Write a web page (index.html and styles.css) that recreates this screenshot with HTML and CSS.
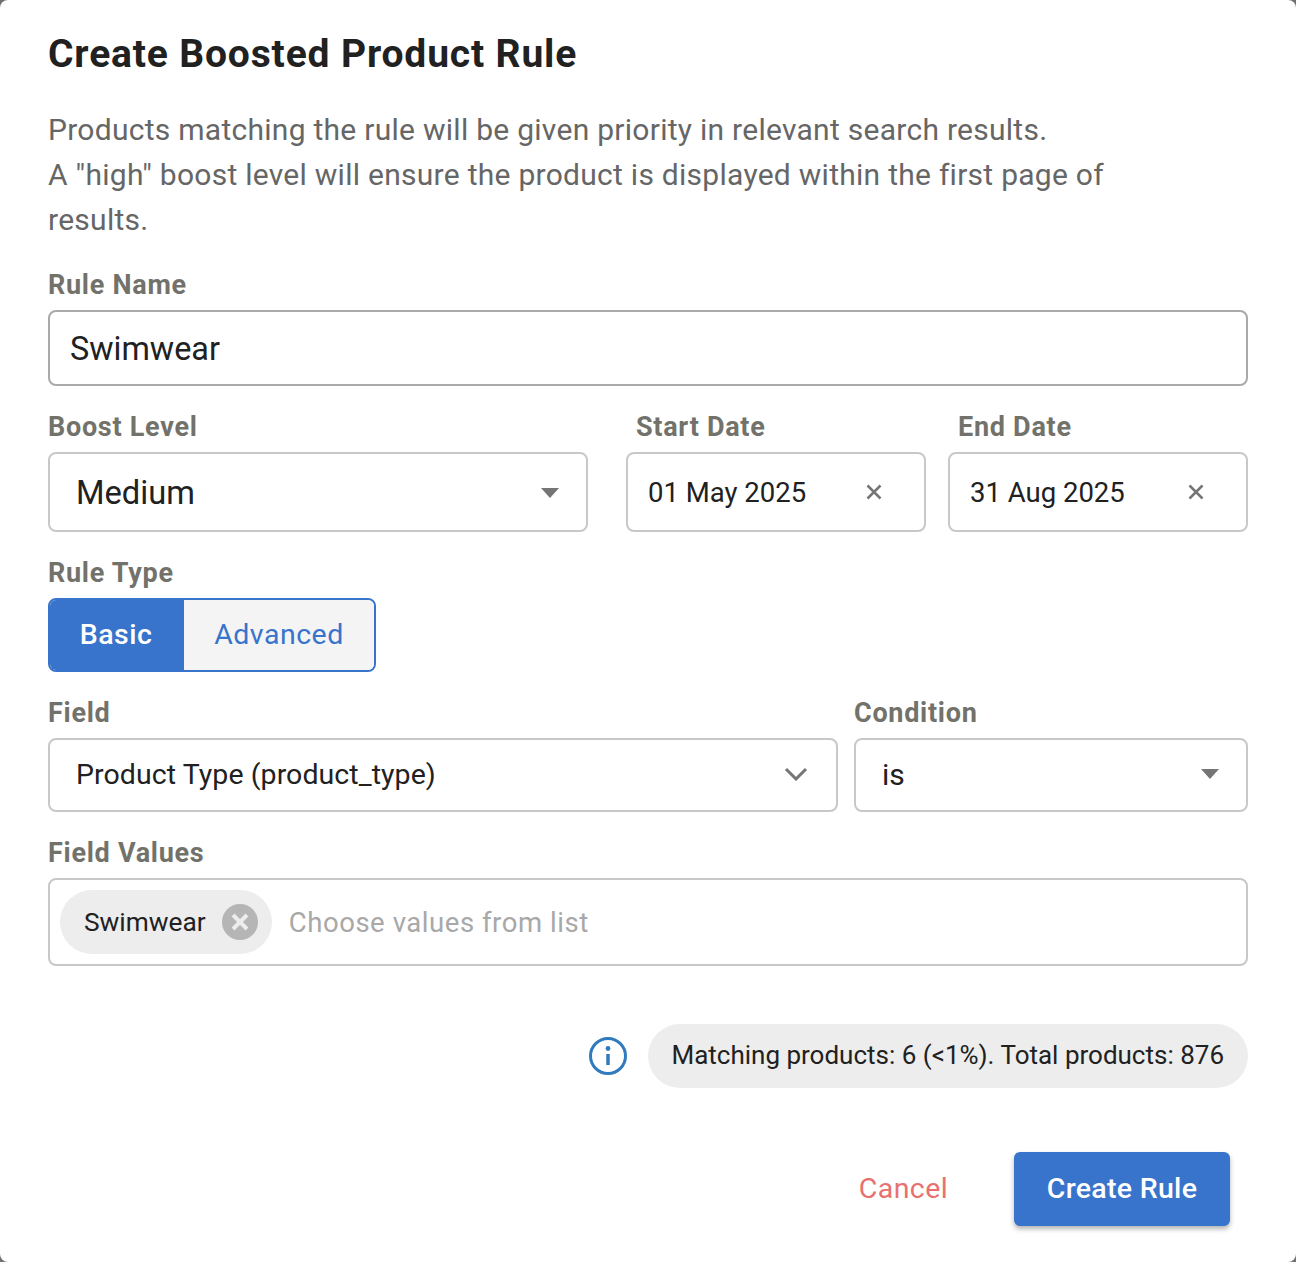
FILE: index.html
```html
<!DOCTYPE html>
<html lang="en">
<head>
<meta charset="utf-8">
<title>Create Boosted Product Rule</title>
<link rel="stylesheet" href="styles.css">
</head>
<body>
<main class="dialog">
  <h1 class="title">Create Boosted Product Rule</h1>
  <p class="desc">Products matching the rule will be given priority in relevant search results.<br>A "high" boost level will ensure the product is displayed within the first page of results.</p>

  <div class="field">
    <div class="label">Rule Name</div>
    <div class="control control-name">Swimwear</div>
  </div>

  <div class="row row-boost">
    <div class="field field-boost">
      <div class="label">Boost Level</div>
      <div class="control control-select control-boost">
        <span>Medium</span>
        <span class="caret"></span>
      </div>
    </div>
    <div class="field">
      <div class="label label-indent">Start Date</div>
      <div class="control control-date">
        <span>01 May 2025</span>
        <svg class="clear" viewBox="0 0 20 20"><path d="M3.5 3.5 16.500 16.500M16.500 3.500 3.500 16.500"/></svg>
      </div>
    </div>
    <div class="field">
      <div class="label label-indent">End Date</div>
      <div class="control control-date">
        <span>31 Aug 2025</span>
        <svg class="clear" viewBox="0 0 20 20"><path d="M3.5 3.5 16.500 16.500M16.500 3.500 3.500 16.500"/></svg>
      </div>
    </div>
  </div>

  <div class="field">
    <div class="label">Rule Type</div>
    <div class="toggle">
      <span class="toggle-item toggle-on">Basic</span>
      <span class="toggle-item toggle-off">Advanced</span>
    </div>
  </div>

  <div class="row row-rule">
    <div class="field">
      <div class="label">Field</div>
      <div class="control control-select control-field">
        <span>Product Type (product_type)</span>
        <svg class="chevron" viewBox="0 0 24 14"><path d="M2 2 12 12 22 2"/></svg>
      </div>
    </div>
    <div class="field">
      <div class="label">Condition</div>
      <div class="control control-select control-condition">
        <span>is</span>
        <span class="caret"></span>
      </div>
    </div>
  </div>

  <div class="field">
    <div class="label">Field Values</div>
    <div class="control control-values">
      <span class="chip">
        <span>Swimwear</span>
        <svg class="chip-x" viewBox="0 0 36 36"><circle cx="18" cy="18" r="18"/><path d="M11 11 25 25M25 11 11 25"/></svg>
      </span>
      <span class="placeholder">Choose values from list</span>
    </div>
  </div>

  <div class="info-row">
    <svg class="info" viewBox="0 0 40 40"><circle cx="20" cy="20" r="17.500"/><circle class="info-dot" cx="20" cy="12.500" r="2.400"/><path d="M20 18V29"/></svg>
    <span class="pill">Matching products: 6 (&lt;1%). Total products: 876</span>
  </div>

  <div class="actions">
    <span class="cancel">Cancel</span>
    <span class="create">Create Rule</span>
  </div>
</main>
</body>
</html>
```
FILE: styles.css
```css
* { box-sizing: border-box; }
html, body { margin: 0; padding: 0; }
body {
  width: 1296px;
  height: 1262px;
  background: #6f6f6f;
  overflow: hidden;
  font-family: Roboto, "Liberation Sans", sans-serif;
}
.dialog {
  height: 1262px;
  background: #fff;
  border-radius: 8px;
  padding: 30px 48px 0;
  display: flex;
  flex-direction: column;
  gap: 24px;
}
.title {
  margin: 0;
  font-size: 39px;
  line-height: 48px;
  font-weight: 700;
  letter-spacing: .85px;
  color: #212121;
}
.desc {
  margin: 5px 100px 2px 0;
  font-size: 30px;
  line-height: 45px;
  font-weight: 400;
  letter-spacing: .27px;
  color: #666;
}
.field { display: flex; flex-direction: column; gap: 9px; min-width: 0; }
.label {
  padding-top: 1px;
  font-size: 27px;
  line-height: 32px;
  font-weight: 700;
  letter-spacing: .72px;
  color: #72726b;
}
.label-indent { padding-left: 10px; }
.row { display: grid; }
.row-boost { grid-template-columns: 556px 300px 300px; column-gap: 22px; }
.field-boost { width: 540px; }
.row-rule { grid-template-columns: 790px 394px; column-gap: 16px; }
.control {
  border: 2px solid #c8c8c8;
  border-radius: 8px;
  background: #fff;
  display: flex;
  align-items: center;
  color: #212121;
}
.control-name {
  height: 76px;
  padding: 2px 0 0 20px;
  font-size: 32.400px;
  border-color: #a9a9a9;
}
.control-select { justify-content: space-between; }
.control-boost { height: 80px; padding: 2px 27px 0 26px; font-size: 32.700px; }
.control-date { height: 80px; padding: 0 20px; font-size: 27.500px; justify-content: space-between; }
.control-field { height: 74px; padding: 0 27px 2px 26px; font-size: 28.500px; letter-spacing: .07px; }
.control-condition { height: 74px; padding: 0 27px 2px 26px; font-size: 30px; }
.caret {
  width: 0;
  height: 0;
  border-left: 9px solid transparent;
  border-right: 9px solid transparent;
  border-top: 10px solid #757575;
}
.clear { width: 20px; height: 20px; margin-right: 20px; flex: none; }
.clear path { stroke: #757575; stroke-width: 2.500; fill: none; }
.chevron { width: 24px; height: 14px; flex: none; margin-right: 1px; }
.chevron path { stroke: #757575; stroke-width: 3; fill: none; }
.toggle {
  display: flex;
  width: 328px;
  height: 74px;
  border: 2px solid #3874cb;
  border-radius: 8px;
  overflow: hidden;
  font-size: 28.500px;
  font-weight: 500;
  letter-spacing: .5px;
}
.toggle-item { display: flex; align-items: center; justify-content: center; padding-bottom: 2px; }
.toggle-on { width: 134px; padding-right: 2px; background: #3874cb; color: #fff; }
.toggle-off { flex: 1; background: #f4f4f4; color: #3874cb; font-weight: 400; }
.control-values {
  height: 88px;
  padding-left: 10px;
  gap: 17px;
}
.chip {
  display: flex;
  align-items: center;
  gap: 16px;
  height: 64px;
  padding: 0 14px 0 24px;
  border-radius: 32px;
  background: #ededed;
  color: #212121;
  font-size: 26.300px;
}
.chip-x { width: 36px; height: 36px; flex: none; }
.chip-x circle { fill: #b5b5b5; }
.chip-x path { stroke: #ededed; stroke-width: 4; fill: none; }
.placeholder { color: #a8a8a8; font-size: 27.500px; letter-spacing: .55px; }
.info-row {
  margin-top: 34px;
  display: flex;
  justify-content: flex-end;
  align-items: center;
  gap: 20px;
}
.info { width: 40px; height: 40px; flex: none; }
.info circle { fill: none; stroke: #2f7bbd; stroke-width: 3; }
.info .info-dot { fill: #2f7bbd; stroke: none; }
.info path { stroke: #2f7bbd; stroke-width: 3.500; fill: none; }
.pill {
  height: 64px;
  padding: 0 24px 2px 23.500px;
  border-radius: 32px;
  background: #ededed;
  color: #212121;
  font-size: 26px;
  display: flex;
  align-items: center;
}
.actions {
  margin-top: 40px;
  display: flex;
  justify-content: flex-end;
  align-items: center;
  padding-right: 18px;
  gap: 66px;
  font-size: 28.500px;
  font-weight: 500;
  letter-spacing: .3px;
}
.cancel { color: #e8716f; font-weight: 400; letter-spacing: .4px; margin-bottom: 2px; }
.create {
  width: 216px;
  height: 74px;
  padding-bottom: 2px;
  border-radius: 6px;
  background: #3874cb;
  color: #fff;
  display: flex;
  align-items: center;
  justify-content: center;
  box-shadow: 0 3px 5px rgba(0, 0, 0, .3);
}
```
